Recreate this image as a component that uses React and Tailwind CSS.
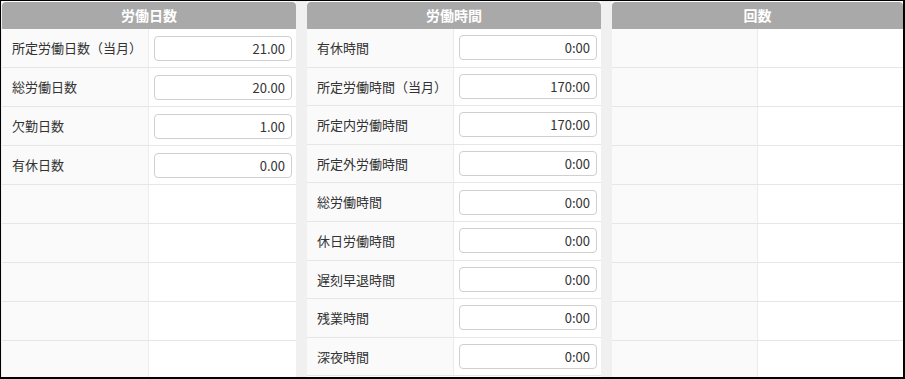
import React from "react";

const font = { fontFamily: '"Noto Sans CJK JP", "Noto Sans", sans-serif' };

const days = [
  { label: "所定労働日数（当月）", value: "21.00" },
  { label: "総労働日数", value: "20.00" },
  { label: "欠勤日数", value: "1.00" },
  { label: "有休日数", value: "0.00" },
];

const hours = [
  { label: "有休時間", value: "0:00" },
  { label: "所定労働時間（当月）", value: "170:00" },
  { label: "所定内労働時間", value: "170:00" },
  { label: "所定外労働時間", value: "0:00" },
  { label: "総労働時間", value: "0:00" },
  { label: "休日労働時間", value: "0:00" },
  { label: "遅刻早退時間", value: "0:00" },
  { label: "残業時間", value: "0:00" },
  { label: "深夜時間", value: "0:00" },
];

const ROWS = 9;

function Row({ item, tight }) {
  return (
    <div
      className={`flex shrink-0 border-b border-[#e6e6e6] ${
        tight ? "h-[38.6px]" : "h-[39px]"
      }`}
    >
      <div className="flex w-1/2 items-center border-r border-[#ececec] bg-[#fafafa] pl-[10px] text-[13px] text-[#333]">
        {item?.label}
      </div>
      <div className="flex w-1/2 items-center bg-white pl-[5px] pr-[4px]">
        {item && (
          <input
            readOnly
            value={item.value}
            className="h-[25px] w-full rounded-[4px] border border-[#cfcfcf] bg-white pr-[6px] text-right text-[13px] text-[#333] outline-none"
            style={font}
          />
        )}
      </div>
    </div>
  );
}

function Panel({ title, items, tight, className }) {
  const rows = Array.from({ length: ROWS }, (_, i) => items[i]);
  return (
    <div className={`flex flex-col overflow-hidden bg-white ${className}`}>
      <div className="mt-px flex h-[27px] shrink-0 items-center justify-center rounded-t-[4px] bg-[#a9a9a9] text-[14px] font-bold text-white">
        {title}
      </div>
      {rows.map((item, i) => (
        <Row key={i} item={item} tight={tight} />
      ))}
    </div>
  );
}

export default function App() {
  return (
    <div
      className="h-[379px] w-[905px] overflow-hidden border-t border-l border-r-2 border-b-2 border-black bg-white"
      style={font}
    >
      <div className="flex h-full gap-[11px] bg-[#f0f0f0] pl-px">
        <Panel title="労働日数" items={days} className="w-[294px] bg-[#f0f0f0]" />
        <Panel title="労働時間" items={hours} tight className="w-[294px] bg-[#f0f0f0]" />
        <Panel title="回数" items={[]} className="flex-1 bg-[#f0f0f0]" />
      </div>
    </div>
  );
}
